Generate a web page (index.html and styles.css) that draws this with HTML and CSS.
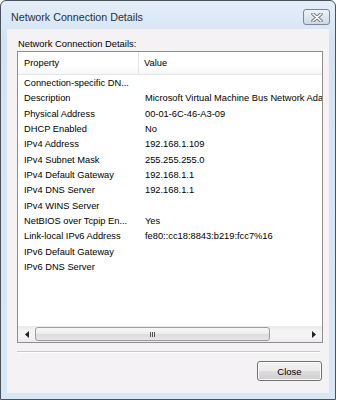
FILE: index.html
```html
<!DOCTYPE html>
<html lang="en">
  <head>
    <meta charset="UTF-8" />
    <title>Network Connection Details</title>
    <link rel="stylesheet" href="styles.css">
  </head>
  <body>
    <div class="window">
      <div class="titlebar">
        <span class="title">Network Connection Details</span>
        <button class="close-x" title="Close">
          <svg width="12" height="9" viewBox="0 0 12 9">
            <path d="M2 1 L10 8 M10 1 L2 8" stroke="#6e7480" stroke-width="3.4" stroke-linecap="round" />
            <path d="M2 1 L10 8 M10 1 L2 8" stroke="#fff" stroke-width="1.6" stroke-linecap="round" />
          </svg>
        </button>
      </div>

      <div class="client">
        <div class="label">Network Connection Details:</div>

        <div class="listbox">
          <div class="list-header">
            <div class="col-prop">Property</div>
            <div class="col-val">Value</div>
          </div>
          <div class="list-body">
            <div class="row"><span class="col-prop">Connection-specific DN...</span><span class="col-val"></span></div>
            <div class="row"><span class="col-prop">Description</span><span class="col-val">Microsoft Virtual Machine Bus Network Adapter</span></div>
            <div class="row"><span class="col-prop">Physical Address</span><span class="col-val">00-01-6C-46-A3-09</span></div>
            <div class="row"><span class="col-prop">DHCP Enabled</span><span class="col-val">No</span></div>
            <div class="row"><span class="col-prop">IPv4 Address</span><span class="col-val">192.168.1.109</span></div>
            <div class="row"><span class="col-prop">IPv4 Subnet Mask</span><span class="col-val">255.255.255.0</span></div>
            <div class="row"><span class="col-prop">IPv4 Default Gateway</span><span class="col-val">192.168.1.1</span></div>
            <div class="row"><span class="col-prop">IPv4 DNS Server</span><span class="col-val">192.168.1.1</span></div>
            <div class="row"><span class="col-prop">IPv4 WINS Server</span><span class="col-val"></span></div>
            <div class="row"><span class="col-prop">NetBIOS over Tcpip En...</span><span class="col-val">Yes</span></div>
            <div class="row"><span class="col-prop">Link-local IPv6 Address</span><span class="col-val">fe80::cc18:8843:b219:fcc7%16</span></div>
            <div class="row"><span class="col-prop">IPv6 Default Gateway</span><span class="col-val"></span></div>
            <div class="row"><span class="col-prop">IPv6 DNS Server</span><span class="col-val"></span></div>
          </div>
          <div class="hscroll">
            <div class="arrow">
              <svg width="4" height="7" viewBox="0 0 4 7"><path d="M4 0 L0 3.5 L4 7 Z" fill="#222" /></svg>
            </div>
            <div class="track">
              <div class="thumb"><span class="grip"></span></div>
            </div>
            <div class="arrow">
              <svg width="4" height="7" viewBox="0 0 4 7"><path d="M0 0 L4 3.5 L0 7 Z" fill="#222" /></svg>
            </div>
          </div>
        </div>

        <div class="separator"></div>

        <div class="buttons">
          <button class="btn">Close</button>
        </div>
      </div>
    </div>
  </body>
</html>
```

FILE: styles.css
```css
/* General */
body {
  margin: 0;
  background: #fff;
  font-family: "Liberation Sans", Arial, sans-serif;
  color: #000;
}

/* Window frame */
.window {
  width: 334px;
  height: 398px;
  border: 1px solid #4a525c;
  border-radius: 6px 6px 0 0;
  background: linear-gradient(180deg, #e4eef9 0%, #d3e3f4 40px, #d8e7f6 100%);
  padding: 0 6px 6px 6px;
  box-sizing: border-box;
  width: 336px;
  height: 400px;
  display: flex;
  flex-direction: column;
}

.titlebar {
  height: 28px;
  display: flex;
  align-items: flex-start;
  justify-content: space-between;
}

.title {
  font-size: 10.7px;
  color: #2b2f36;
  padding: 10px 0 0 4px;
}

.close-x {
  margin: 8px -1px 0 0;
  width: 27px;
  height: 16px;
  padding: 0;
  border: 1px solid #7d8696;
  border-radius: 3px;
  background: linear-gradient(180deg, #eef3f9 0%, #dde6f0 50%, #cfd9e6 100%);
  display: flex;
  align-items: center;
  justify-content: center;
}

/* Client area */
.client {
  flex: 1;
  background: #f5f2f6;
  padding: 8px 7px 0 10px;
  display: flex;
  flex-direction: column;
}

.label {
  font-size: 9.4px;
  height: 14px;
  line-height: 14px;
  padding-left: 1px;
}

/* List view */
.listbox {
  margin-top: 0;
  width: 306px;
  height: 292px;
  box-sizing: border-box;
  border: 1px solid #8e8f8f;
  background: #fff;
  display: flex;
  flex-direction: column;
  overflow: hidden;
  font-size: 9.3px;
}

.list-header {
  height: 23px;
  flex: none;
  display: flex;
  align-items: center;
  border-bottom: 1px solid #e5e5e5;
  background: linear-gradient(180deg, #fff 0%, #fff 60%, #f6f7f9 100%);
  box-sizing: border-box;
}

.col-prop {
  width: 121px;
  flex: none;
  padding-left: 6px;
  box-sizing: border-box;
  white-space: nowrap;
  overflow: hidden;
}

.col-val {
  padding-left: 6px;
  white-space: nowrap;
}

.list-header .col-prop {
  height: 23px;
  line-height: 23px;
  border-right: 1px solid #e3e5e8;
}

.list-header .col-val {
  padding-left: 5px;
}

.list-body {
  flex: 1;
  padding-top: 1px;
}

.row {
  height: 15.33px;
  line-height: 15.33px;
  display: flex;
}

/* Horizontal scrollbar */
.hscroll {
  height: 16px;
  flex: none;
  display: flex;
  background: linear-gradient(180deg, #e9e9e9 0%, #f4f4f4 30%, #f4f4f4 70%, #eaeaea 100%);
}

.arrow {
  width: 17px;
  display: flex;
  align-items: center;
  justify-content: center;
}

.track {
  flex: 1;
  padding: 1px 0;
}

.thumb {
  width: 235px;
  height: 14px;
  box-sizing: border-box;
  border: 1px solid #9c9c9c;
  border-radius: 3px;
  background: linear-gradient(180deg, #f7f7f7 0%, #ececec 50%, #dcdcdc 51%, #e6e6e6 100%);
  display: flex;
  align-items: center;
  justify-content: center;
}

.grip {
  width: 6px;
  height: 5px;
  background: repeating-linear-gradient(90deg, #555 0 1px, transparent 1px 2px);
}

/* Footer */
.separator {
  margin-top: 8px;
  width: 303px;
  height: 1px;
  background: #c8c8cc;
  border-bottom: 1px solid #fff;
}

.buttons {
  display: flex;
  justify-content: flex-end;
  margin-top: 8px;
}

.btn {
  width: 65px;
  height: 20px;
  margin-right: 0;
  font-family: "Liberation Sans", Arial, sans-serif;
  font-size: 9.5px;
  color: #000;
  border: 1px solid #707070;
  border-radius: 3px;
  background: linear-gradient(180deg, #f2f2f2 0%, #ebebeb 50%, #dddddd 51%, #cfcfcf 100%);
  box-shadow: inset 0 0 0 1px #fbfbfb;
  padding: 0;
}
```
